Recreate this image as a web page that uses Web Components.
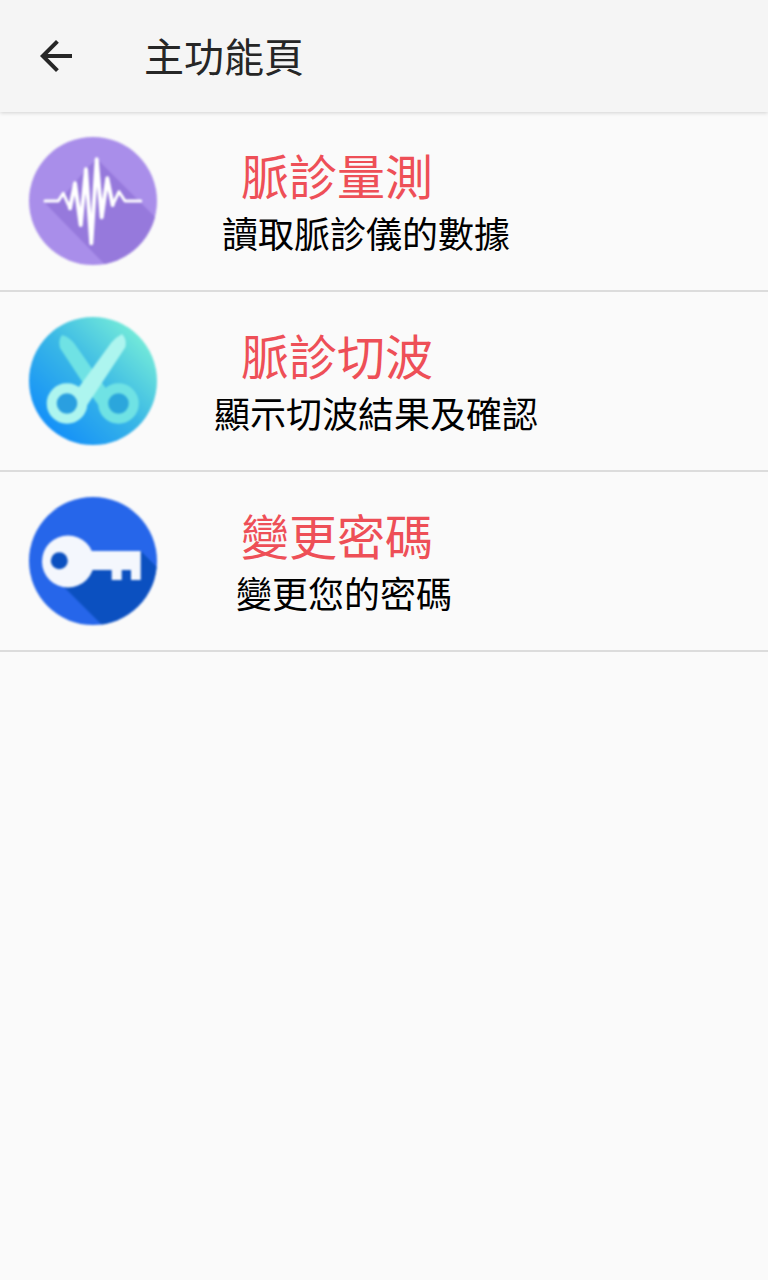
<!DOCTYPE html>
<html lang="zh-Hant">
<head>
<meta charset="utf-8">
<title>主功能頁</title>
<style>
  html, body { margin: 0; height: 100%; background: #fafafa; }
  body { font-family: "Noto Sans CJK TC", "Noto Sans", sans-serif; }
</style>
</head>
<body>
<app-bar heading="主功能頁"></app-bar>
<menu-row heading="脈診量測" sub="讀取脈診儀的數據" sub-left="-19">
  <svg slot="icon" viewBox="0 0 128 128" width="128" height="128">
    <defs><clipPath id="c1"><circle cx="64" cy="64" r="64"/></clipPath></defs>
    <circle cx="64" cy="64" r="64" fill="#a98eea"/>
    <g clip-path="url(#c1)">
      <path d="M68 22 L140 94 L140 140 L88 140 L16 66 L30 64 L46 46 L57 32Z" fill="#9679dc"/>
    </g>
    <path d="M16 64H29.3L34.3 56.3 41 71.3M83.7 68 90 54.7 96 64H111.7" fill="none" stroke="#fff" stroke-width="3" stroke-linejoin="round" stroke-linecap="round"/>
    <path d="M41 71.3 46 46.3 51.7 88 57 32.3 62.3 106.3 67.7 22.3 72.7 80.3 78.3 41.3 83.7 68" fill="none" stroke="#fff" stroke-width="4" stroke-linejoin="round" stroke-linecap="round"/>
  </svg>
</menu-row>
<menu-row heading="脈診切波" sub="顯示切波結果及確認" sub-left="-27">
  <svg slot="icon" viewBox="0 0 128 128" width="128" height="128">
    <defs>
      <linearGradient id="g2" x1="0.14" y1="0.86" x2="0.88" y2="0.1">
        <stop offset="0" stop-color="#1490f8"/>
        <stop offset="0.5" stop-color="#3ab8e6"/>
        <stop offset="1" stop-color="#78eed8"/>
      </linearGradient>
    </defs>
    <circle cx="64" cy="64" r="64" fill="url(#g2)"/>
    <path d="M33 18 Q29 23 31 31 L54 66 L72 92 L83 80 L45 26 Q40 20 33 18Z" fill="#6fe2e4"/>
    <circle cx="89.5" cy="86.5" r="15.3" fill="#2ba6dc" stroke="#6fe2e4" stroke-width="10"/>
    <path d="M93 17 Q98 22 96.5 30 L57 90 L44 72 L50 70 L82 26 Q87 20 93 17Z" fill="#adf5ef"/>
    <circle cx="38" cy="86.5" r="15.3" fill="#2a9fe0" stroke="#adf5ef" stroke-width="10"/>
  </svg>
</menu-row>
<menu-row heading="變更密碼" sub="變更您的密碼" sub-left="-5">
  <svg slot="icon" viewBox="0 0 128 128" width="128" height="128">
    <defs><clipPath id="c3"><circle cx="64" cy="64" r="64"/></clipPath></defs>
    <circle cx="64" cy="64" r="64" fill="#2666ea"/>
    <g clip-path="url(#c3)">
      <path d="M111.7 54 L140 82 L140 140 L85 140 L35 90 L60 60Z" fill="#0b50c0"/>
    </g>
    <circle cx="39" cy="64.5" r="26" fill="#f4f7fd"/>
    <path fill="#f4f7fd" d="M55 54H111.7V83H102V73H92.7V83H82.7V73H55Z"/>
    <circle cx="30.3" cy="63.7" r="8.5" fill="#0b50c0"/>
  </svg>
</menu-row>
<script>
class AppBar extends HTMLElement {
  constructor() {
    super();
    this.attachShadow({ mode: "open" });
  }
  connectedCallback() {
    const heading = this.getAttribute("heading") || "";
    this.shadowRoot.innerHTML = `
      <style>
        :host {
          display: flex;
          align-items: center;
          box-sizing: border-box;
          height: 112px;
          padding-left: 32px;
          background: #f5f5f5;
          box-shadow: 0 1px 4px rgba(0, 0, 0, 0.16);
          position: relative;
          color: #262626;
        }
        svg { width: 48px; height: 48px; display: block; fill: currentColor; }
        h1 { margin: 0 0 2px 64px; font-size: 40px; font-weight: 400; line-height: 48px; }
      </style>
      <svg viewBox="0 0 24 24"><path d="M20 11H7.83l5.59-5.59L12 4l-8 8 8 8 1.41-1.41L7.83 13H20v-2z"/></svg>
      <h1>${heading}</h1>
    `;
  }
}

class MenuRow extends HTMLElement {
  constructor() {
    super();
    this.attachShadow({ mode: "open" });
  }
  connectedCallback() {
    const heading = this.getAttribute("heading") || "";
    const sub = this.getAttribute("sub") || "";
    // subtitles sit at a different offset in each row of the reference
    const subLeft = this.getAttribute("sub-left") || "0";
    this.shadowRoot.innerHTML = `
      <style>
        :host {
          display: flex;
          box-sizing: border-box;
          height: 180px;
          padding: 25px 0 0 29px;
          border-bottom: 2px solid #dcdcdc;
        }
        ::slotted(svg) { display: block; flex: none; filter: blur(0.8px); }
        .text { margin-left: 84px; padding-top: 9px; }
        .title { font-size: 48px; line-height: 57px; color: #ee4f57; white-space: nowrap; }
        .sub { font-size: 36px; line-height: 43px; color: #000; white-space: nowrap; margin-top: 8px; margin-left: ${subLeft}px; }
      </style>
      <slot name="icon"></slot>
      <div class="text">
        <div class="title">${heading}</div>
        <div class="sub">${sub}</div>
      </div>
    `;
  }
}

customElements.define("app-bar", AppBar);
customElements.define("menu-row", MenuRow);
</script>
</body>
</html>
